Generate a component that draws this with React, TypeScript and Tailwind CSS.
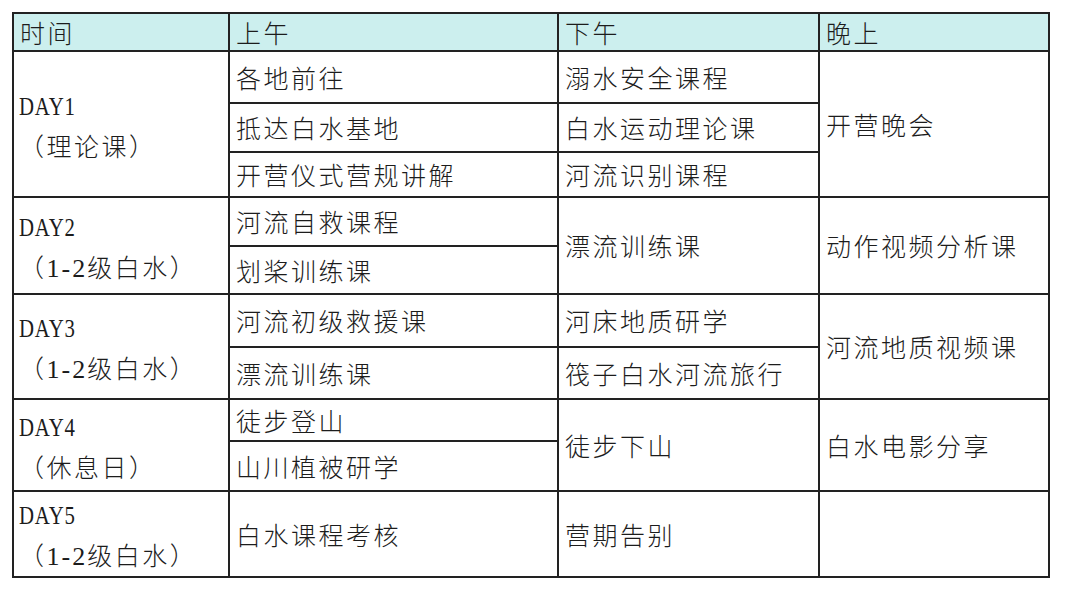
import React from "react";

// schedule table: one row per slot, rowSpan for merged cells
type Row = {
  day?: { label: string; note: React.ReactNode; span: number };
  am: string;
  pm?: { text: string; span: number };
  eve?: { text: string; span: number };
  h: string;
};

const num = (s: string) => (
  <span className="font-['Liberation_Serif',serif] text-[26px] tracking-[2px]">{s}</span>
);

const rows: Row[] = [
  {
    day: { label: "DAY1", note: <>（理论课）</>, span: 3 },
    am: "各地前往",
    pm: { text: "溺水安全课程", span: 1 },
    eve: { text: "开营晚会", span: 3 },
    h: "h-[52px]",
  },
  { am: "抵达白水基地", pm: { text: "白水运动理论课", span: 1 }, h: "h-[49px]" },
  { am: "开营仪式营规讲解", pm: { text: "河流识别课程", span: 1 }, h: "h-[45px]" },
  {
    day: { label: "DAY2", note: <>（{num("1-2")}级白水）</>, span: 2 },
    am: "河流自救课程",
    pm: { text: "漂流训练课", span: 2 },
    eve: { text: "动作视频分析课", span: 2 },
    h: "h-[49px]",
  },
  { am: "划桨训练课", h: "h-[48px]" },
  {
    day: { label: "DAY3", note: <>（{num("1-2")}级白水）</>, span: 2 },
    am: "河流初级救援课",
    pm: { text: "河床地质研学", span: 1 },
    eve: { text: "河流地质视频课", span: 2 },
    h: "h-[53px]",
  },
  { am: "漂流训练课", pm: { text: "筏子白水河流旅行", span: 1 }, h: "h-[52px]" },
  {
    day: { label: "DAY4", note: <>（休息日）</>, span: 2 },
    am: "徒步登山",
    pm: { text: "徒步下山", span: 2 },
    eve: { text: "白水电影分享", span: 2 },
    h: "h-[42px]",
  },
  { am: "山川植被研学", h: "h-[50px]" },
  {
    day: { label: "DAY5", note: <>（{num("1-2")}级白水）</>, span: 1 },
    am: "白水课程考核",
    pm: { text: "营期告别", span: 1 },
    eve: { text: "", span: 1 },
    h: "h-[78px]",
  },
];

const cell = "border-2 border-[#222] align-middle pl-[6px] pr-1 py-0";

export default function App() {
  return (
    <div className="min-h-[590px] bg-white pt-[12px] pl-[12px] font-['Noto_Sans_CJK_SC',sans-serif] font-light text-[25px] tracking-[2.5px] text-[#1c1c1c]">
      <table className="border-collapse table-fixed w-[1036px]">
        <colgroup>
          <col className="w-[216px]" />
          <col className="w-[329px]" />
          <col className="w-[261px]" />
          <col className="w-[230px]" />
        </colgroup>
        <thead>
          <tr className="h-[38px] bg-[#ccefee] text-left">
            <th className={`${cell} font-light leading-none`}>时间</th>
            <th className={`${cell} font-light leading-none`}>上午</th>
            <th className={`${cell} font-light leading-none`}>下午</th>
            <th className={`${cell} font-light leading-none`}>晚上</th>
          </tr>
        </thead>
        <tbody>
          {rows.map((r, i) => (
            <tr key={i} className={r.h}>
              {r.day && (
                <td rowSpan={r.day.span} className={`${cell} !pl-[5px]`}>
                  <div className="flex flex-col leading-[39px] pt-[4px]">
                    <span className="inline-block origin-left scale-x-[0.8] font-['Liberation_Serif',serif] text-[26px] tracking-[1px]">
                      {r.day.label}
                    </span>
                    <span>{r.day.note}</span>
                  </div>
                </td>
              )}
              <td className={`${cell} leading-none`}>{r.am}</td>
              {r.pm && (
                <td rowSpan={r.pm.span} className={`${cell} leading-none`}>
                  {r.pm.text}
                </td>
              )}
              {r.eve && (
                <td rowSpan={r.eve.span} className={`${cell} leading-none`}>
                  {r.eve.text}
                </td>
              )}
            </tr>
          ))}
        </tbody>
      </table>
    </div>
  );
}
